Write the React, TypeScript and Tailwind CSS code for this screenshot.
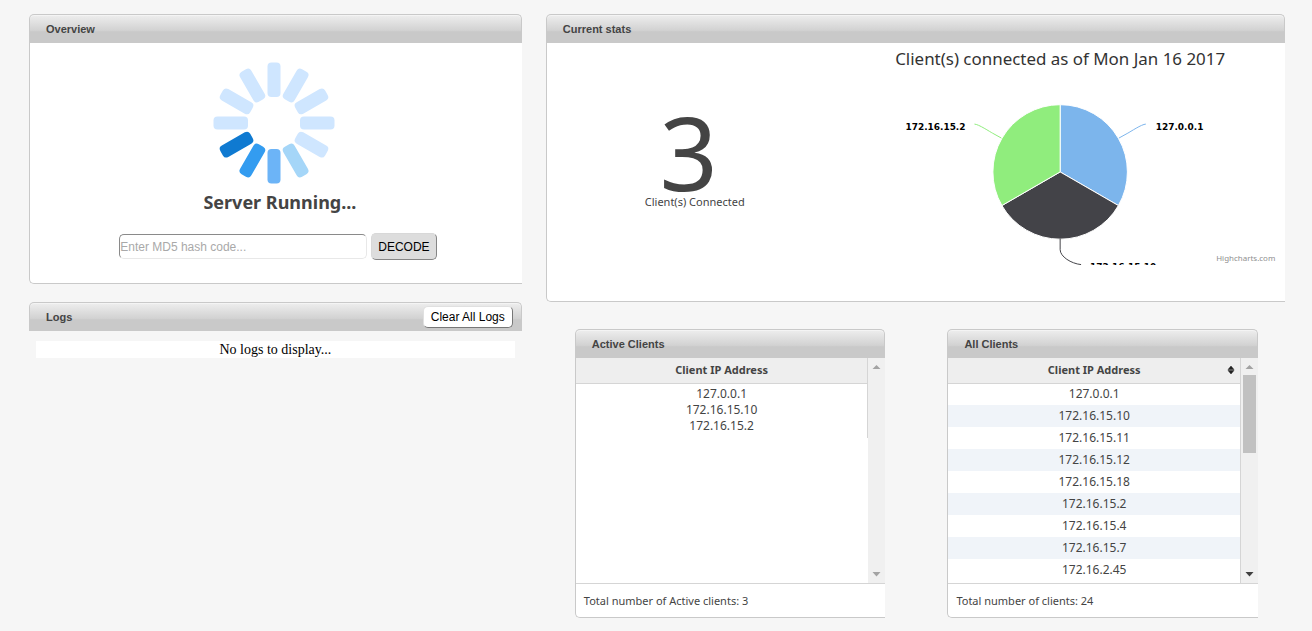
import type { ReactNode } from "react";

const activeClients = ["127.0.0.1", "172.16.15.10", "172.16.15.2"];

const allClients = [
  "127.0.0.1",
  "172.16.15.10",
  "172.16.15.11",
  "172.16.15.12",
  "172.16.15.18",
  "172.16.15.2",
  "172.16.15.4",
  "172.16.15.7",
  "172.16.2.45",
];

const petals = [
  "#cfe6ff",
  "#cfe6ff",
  "#cfe6ff",
  "#cfe6ff",
  "#cfe6ff",
  "#a5d6f8",
  "#6cb4f7",
  "#339cf0",
  "#0f7ad1",
  "#cfe6ff",
  "#cfe6ff",
  "#cfe6ff",
];

function PanelHeader({ title, children }: { title: string; children?: ReactNode }) {
  return (
    <header className="flex h-[29px] items-center justify-between rounded-t-[5px] border border-b-0 border-[#c9c9c9] bg-linear-to-b from-[#eeeeee] via-[#d2d2d2] via-55% to-[#c9c9c9] to-60% pr-2 pl-4 shadow-[inset_0_1px_0_#f4f4f4]">
      <h2 className="font-['Liberation_Sans',sans-serif] text-[11px] leading-4 font-bold text-[#444]">{title}</h2>
      {children}
    </header>
  );
}

function Panel({ title, children }: { title: string; children: ReactNode }) {
  return (
    <section>
      <PanelHeader title={title} />
      <div className="rounded-bl-[5px] border-b border-l border-[#c9c9c9] bg-white">{children}</div>
    </section>
  );
}

function Spinner() {
  return (
    <svg className="mr-1 h-[122px] w-[122px]" viewBox="-61 -61 122 122" role="img" aria-label="Running">
      {petals.map((color, i) => (
        <rect key={i} x="-6.5" y="-60.5" width="13" height="34.5" rx="4" fill={color} transform={`rotate(${i * 30})`} />
      ))}
    </svg>
  );
}

function ScrollBar({ active }: { active: boolean }) {
  return (
    <div className="flex w-[17px] shrink-0 flex-col items-center justify-between bg-[#f0f0f0]">
      <div className="flex w-full flex-col items-center">
        <svg className="h-[17px] w-[17px]" viewBox="0 0 17 17" aria-hidden="true">
          <path d="M4.500 11h8L8.500 7z" fill="#a3a3a3" />
        </svg>
        {active && <div className="h-[78px] w-[13px] bg-[#c1c1c1]" />}
      </div>
      <svg className="h-[17px] w-[17px]" viewBox="0 0 17 17" aria-hidden="true">
        <path d="M4.500 6h8l-4 4.500z" fill={active ? "#404040" : "#a3a3a3"} />
      </svg>
    </div>
  );
}

function ClientPanel({
  title,
  clients,
  striped,
  footer,
}: {
  title: string;
  clients: string[];
  striped: boolean;
  footer: string;
}) {
  return (
    <Panel title={title}>
      <div className="flex h-[225px] overflow-hidden">
        <div className={striped ? "flex-1 border-r border-[#d5d5d5]" : "flex-1"}>
          <table className={striped ? "w-full border-collapse" : "w-full border-collapse border-r border-[#d5d5d5]"}>
            <thead>
              <tr className="h-[25px] border-b border-[#d5d5d5] bg-[#eeeeee]">
                <th scope="col" className="p-0 text-[11px] leading-4 font-bold">
                  <div className="grid grid-cols-[1fr_auto_1fr] items-center">
                    <span className="col-start-2">Client IP Address</span>
                    {striped && (
                      <svg className="mr-1 h-[10px] w-[10px] justify-self-end" viewBox="0 0 10 10" aria-hidden="true">
                        <path d="M2 4.500h6L5 1zM2 5.500h6L5 9z" fill="#222" stroke="#222" strokeWidth="0.500" />
                      </svg>
                    )}
                  </div>
                </th>
              </tr>
            </thead>
            <tbody>
              {!striped && <tr className="h-[3px]" />}
              {clients.map((ip) => (
                <tr key={ip} className={striped ? "h-[22px] even:bg-[#f0f4f9]" : "h-4"}>
                  <td className="p-0 text-center text-xs leading-4">{ip}</td>
                </tr>
              ))}
              <tr className={striped ? "h-[22px] bg-[#f0f4f9]" : "h-1"} />
            </tbody>
          </table>
        </div>
        <ScrollBar active={striped} />
      </div>
      <p className="flex h-[34px] items-center border-t border-[#d5d5d5] px-2 text-[11px] leading-4">{footer}</p>
    </Panel>
  );
}

function ClientsChart() {
  return (
    <svg className="h-[222px] w-full" viewBox="0 0 452 222" role="img" aria-label="Connected clients">
      <text x="226" y="22" textAnchor="middle" fontSize="17" fill="#333">
        Client(s) connected as of Mon Jan 16 2017
      </text>
      <g stroke="#fff" strokeWidth="1">
        <path d="M226 129V61.500A67.500 67.500 0 0 1 284.460 162.750z" fill="#7cb5ec" />
        <path d="M226 129L284.460 162.750A67.500 67.500 0 0 1 167.540 162.750z" fill="#434348" />
        <path d="M226 129L167.540 162.750A67.500 67.500 0 0 1 226 61.500z" fill="#90ed7d" />
      </g>
      <g fill="none" strokeWidth="1">
        <path d="M312 81C308 81 296 89 294 90L285 95" stroke="#7cb5ec" />
        <path d="M140 81C144 81 156 89 158 90L167 95" stroke="#90ed7d" />
        <path d="M226 196V207C226 214 237 221 247 222" stroke="#434348" />
      </g>
      <g className="font-['DejaVu_Sans',sans-serif]" fontSize="9" fontWeight="bold" fill="#000">
        <text x="322" y="87">127.0.0.1</text>
        <text x="131" y="87" textAnchor="end">
          172.16.15.2
        </text>
        <text x="256" y="227">172.16.15.10</text>
      </g>
      <text x="442" y="218" textAnchor="end" fontSize="8" fill="#909090">
        Highcharts.com
      </text>
    </svg>
  );
}

export default function App() {
  return (
    <main className="grid min-h-screen grid-cols-[2fr_3fr] content-start gap-6 bg-[#f6f6f6] pt-[14px] pr-[27px] pb-3 pl-[29px] font-['Noto_Sans',sans-serif] text-[#444]">
      <div className="flex min-w-0 flex-col gap-[18px]">
        <Panel title="Overview">
          <div className="flex h-[240px] flex-col items-center pt-[19px]">
            <Spinner />
            <p className="mt-[6px] pl-2 text-lg leading-6 font-bold">Server Running...</p>
            <form className="mt-[19px] flex items-center gap-1 pl-1" onSubmit={(e) => e.preventDefault()}>
              <input
                type="text"
                aria-label="MD5 hash code"
                placeholder="Enter MD5 hash code..."
                className="h-[25px] w-[248px] rounded-[5px] border border-t-[#8a8a8a] border-r-[#e8e8e8] border-b-[#e8e8e8] border-l-[#8a8a8a] bg-white font-['Liberation_Sans',sans-serif] text-xs text-black placeholder:text-[#a9a9a9]"
              />
              <button
                type="submit"
                className="h-[27px] rounded-[5px] border border-t-[#d8d8d8] border-r-[#858585] border-b-[#858585] border-l-[#d8d8d8] bg-[#dddddd] px-[6px] font-['Liberation_Sans',sans-serif] text-xs text-black"
              >
                DECODE
              </button>
            </form>
          </div>
        </Panel>

        <section>
          <PanelHeader title="Logs">
            <button
              type="button"
              className="h-[22px] rounded-[5px] border border-t-[#e0e0e0] border-r-[#777] border-b-[#777] border-l-[#e0e0e0] bg-white px-[7px] font-['Liberation_Sans',sans-serif] text-xs text-black"
            >
              Clear All Logs
            </button>
          </PanelHeader>
          <p className="mx-[7px] mt-[10px] bg-white text-center font-['Liberation_Serif',serif] text-sm leading-[17px] text-black">
            No logs to display...
          </p>
        </section>
      </div>

      <div className="flex min-w-0 flex-col gap-[27px]">
        <Panel title="Current stats">
          <div className="grid h-[258px] grid-cols-[39fr_61fr]">
            <div className="flex flex-col items-center pt-[65px]">
              <span className="pr-1 text-[102px] leading-[88px]">3</span>
              <span className="pl-2 text-[11px] leading-[11px]">Client(s) Connected</span>
            </div>
            <ClientsChart />
          </div>
        </Panel>

        <div className="grid grid-cols-2 gap-[62px] pr-[27px] pl-[29px]">
          <ClientPanel
            title="Active Clients"
            clients={activeClients}
            striped={false}
            footer="Total number of Active clients: 3"
          />
          <ClientPanel title="All Clients" clients={allClients} striped footer="Total number of clients: 24" />
        </div>
      </div>
    </main>
  );
}
